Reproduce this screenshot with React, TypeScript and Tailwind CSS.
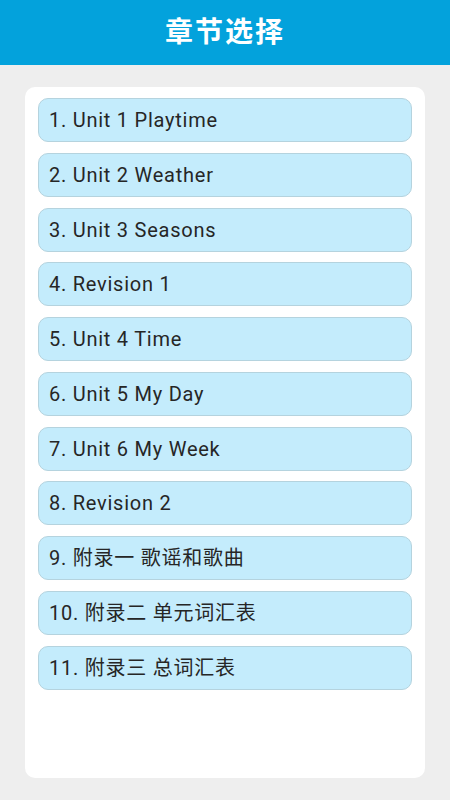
const chapters = [
  "1. Unit 1 Playtime",
  "2. Unit 2 Weather",
  "3. Unit 3 Seasons",
  "4. Revision 1",
  "5. Unit 4 Time",
  "6. Unit 5 My Day",
  "7. Unit 6 My Week",
  "8. Revision 2",
  "9. 附录一 歌谣和歌曲",
  "10. 附录二 单元词汇表",
  "11. 附录三 总词汇表",
];

export default function App() {
  return (
    <div
      className="flex h-[800px] w-[450px] flex-col bg-[#eeeeee]"
      style={{ fontFamily: 'Roboto, "Noto Sans CJK SC", sans-serif' }}
    >
      <header className="flex h-[65px] shrink-0 items-center justify-center bg-[#03a2dc]">
        <h1 className="text-[28px] font-bold tracking-[2px] text-white">章节选择</h1>
      </header>
      <div className="px-[25px] pt-[22px]">
        <div className="flex h-[691px] flex-col gap-[10.75px] rounded-[10px] bg-white px-[13px] py-[11px]">
          {chapters.map((c) => (
            <button
              key={c}
              className="flex h-[44px] shrink-0 items-center rounded-[10px] border border-[#b5d3de] bg-[#c4ecfc] pl-[10px] text-left text-[20px] tracking-[0.75px] text-[#262626]"
            >
              {c}
            </button>
          ))}
        </div>
      </div>
    </div>
  );
}
